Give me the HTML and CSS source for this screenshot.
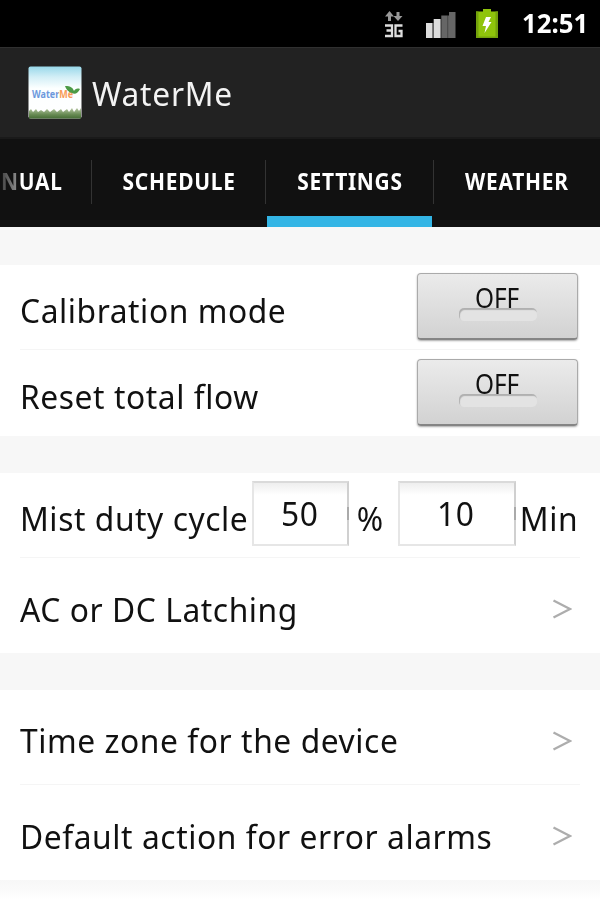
FILE: index.html
```html
<!DOCTYPE html>
<html lang="en">
<head>
<meta charset="utf-8">
<title>WaterMe</title>
<link rel="stylesheet" href="styles.css">
</head>
<body>
<header class="status">
  <svg class="net" width="20" height="28" viewBox="0 0 20 28">
    <path d="M5.500 0L10 5.500H7V10H4V5.500H1ZM14 10L9.500 5H12.500V1H15.500V5H18.500Z" fill="#999"/>
    <path d="M1 14.500H8V25H1M2.500 19.500H8M18.500 14.500H11.500V25H17.500V20H14.500" fill="none" stroke="#ddd" stroke-width="2.300"/>
  </svg>
  <svg class="signal" width="30" height="28" viewBox="0 0 30 28">
    <path d="M0 12H6.500V27H0Z" fill="#ddd"/><path d="M7.700 8H14V27H7.700Z" fill="#ddd"/>
    <path d="M15.300 4.500H21.500V27H15.300ZM23 1H29.500V27H23Z" fill="#666"/>
    <path d="M7 12V27M14.500 8V27M22.200 4.500V27" stroke="#888" stroke-width="1"/>
  </svg>
  <svg class="battery" width="22" height="30" viewBox="0 0 22 30">
    <path d="M0 2.500H7V0H15V2.500H22V29H0Z" fill="#8fc40b"/>
    <path d="M0 2.500H2.500V29H0ZM19.500 2.500H22V29H19.500ZM1 27.500H21V29H1Z" fill="#74a20c"/>
    <path d="M10 8H15L12.500 13H15.500L8.500 24L10 17H6.500Z" fill="#fff"/>
  </svg>
  <span class="clock">12:51</span>
</header>
<div class="appbar">
  <svg class="logo" width="54" height="54" viewBox="0 0 54 54">
    <defs>
      <linearGradient id="sky" x1="0" y1="0" x2="0" y2="1">
        <stop offset="0" stop-color="#98d8ea"/><stop offset=".2" stop-color="#d2eef6"/><stop offset=".42" stop-color="#fcffff"/><stop offset="1" stop-color="#fff"/>
      </linearGradient>
      <linearGradient id="grass" x1="0" y1="0" x2="0" y2="1">
        <stop offset="0" stop-color="#b9c9a6"/><stop offset=".6" stop-color="#698c55"/><stop offset="1" stop-color="#456d35"/>
      </linearGradient>
      <linearGradient id="word" gradientUnits="userSpaceOnUse" x1="4" y1="0" x2="45" y2="0">
        <stop offset="0" stop-color="#6d98dc"/><stop offset=".64" stop-color="#6d98dc"/><stop offset=".65" stop-color="#f79a58"/><stop offset="1" stop-color="#f79a58"/>
      </linearGradient>
    </defs>
    <rect x=".5" y=".5" width="53" height="52" rx="2" fill="url(#sky)"/>
    <path d="M1 45L3 43L5 46L8 43L10 46L13 44L16 46L19 43L22 46L26 43L29 46L33 43L35 46L39 43L41 46L44 42L46 46L49 42L51 45L53 42V52.500H1Z" fill="url(#grass)"/>
    <text x="4" y="32" class="logo-text" fill="url(#word)" textLength="41" lengthAdjust="spacingAndGlyphs">WaterMe</text>
    <path d="M37 20C43 20 45 22 46 25C47 23 49 22 52 23C50 27 47 29 44 27C40 26 38 23 37 20Z" fill="#4c9a46"/>
  </svg>
  <span class="title">WaterMe</span>
</div>
<nav class="tabs">
  <div class="tab tab-manual"><span class="cap">NUAL</span></div>
  <div class="tab tab-schedule"><span class="cap">SCHEDULE</span></div>
  <div class="tab tab-settings"><span class="cap">SETTINGS</span></div>
  <div class="tab tab-weather"><span class="cap">WEATHER</span></div>
</nav>
<main class="list">
  <section class="group">
    <div class="row"><span class="label">Calibration mode</span><button class="toggle"><span class="state">OFF</span><i class="lamp"></i></button></div>
    <div class="row last"><span class="label">Reset total flow</span><button class="toggle"><span class="state">OFF</span><i class="lamp"></i></button></div>
  </section>
  <section class="group">
    <div class="row duty"><span class="label">Mist duty cycle</span><div class="field percent"><span class="num">50</span></div><span class="unit unit-percent">%</span><div class="field minutes"><span class="num">10</span></div><span class="unit unit-min">Min</span></div>
    <div class="row tall last"><span class="label">AC or DC Latching</span><svg class="more" width="20" height="20" viewBox="0 0 20 20"><path d="M1.500 1.500L18 10L1.500 18.500"/></svg></div>
  </section>
  <section class="group">
    <div class="row tall"><span class="label">Time zone for the device</span><svg class="more" width="20" height="20" viewBox="0 0 20 20"><path d="M1.500 1.500L18 10L1.500 18.500"/></svg></div>
    <div class="row tall last"><span class="label">Default action for error alarms</span><svg class="more" width="20" height="20" viewBox="0 0 20 20"><path d="M1.500 1.500L18 10L1.500 18.500"/></svg></div>
  </section>
  <div class="tail"></div>
</main>
</body>
</html>
```
FILE: styles.css
```css
* { box-sizing: border-box; }
body {
  margin: 0;
  width: 600px;
  height: 900px;
  overflow: hidden;
  background: #fff;
  color: #111;
  font-family: "Noto Sans", "Open Sans", sans-serif;
  font-variant-ligatures: none;
}
span { white-space: nowrap; }
.status {
  display: flex;
  align-items: flex-start;
  height: 47px;
  background: #000;
  padding-left: 384px;
}
.net { margin-top: 11px; }
.signal { margin: 11px 0 0 22px; }
.battery { margin: 9px 0 0 20px; }
.clock {
  margin: 5px 0 0 24px;
  color: #fff;
  font-size: 26px;
  line-height: 36px;
  font-weight: 700;
  transform-origin: left;
  transform: scaleX(.99);
}
.appbar {
  display: flex;
  align-items: center;
  height: 92px;
  padding-left: 28px;
  background: #222;
  border-top: 1px solid #303030;
  border-bottom: 2px solid #1a1a1a;
}
.logo-text { font: 700 11px "Noto Sans", sans-serif; }
.title {
  margin-left: 10px;
  color: #f3f3f3;
  font-size: 33.5px;
  line-height: 46px;
  letter-spacing: .8px;
  transform-origin: left;
  transform: scaleX(.945);
}
.tabs {
  display: grid;
  grid-template-columns: 92px 174px 167px 167px;
  height: 88px;
  background: #111;
  color: #fff;
  font-size: 23px;
  font-weight: 700;
  line-height: 42px;
}
.tab {
  display: flex;
  justify-content: center;
  padding-top: 21px;
  background: linear-gradient(#333, #333) right 21px / 1px 44px no-repeat;
}
.tab-settings { border-bottom: 11px solid #33b5e5; margin-left: 1px; width: 165px; }
.tab-settings { background-image: none; }
.tab-weather { background-position: left 21px; background-size: 1px 44px; }
.tab-manual { justify-content: flex-start; padding-left: 1px; }
.tab-manual .cap {
  transform-origin: left;
  color: transparent;
  background: linear-gradient(90deg, #444, #888 17px, #fff 19px);
  -webkit-background-clip: text;
  background-clip: text;
}
.cap { letter-spacing: .8px; transform: scaleX(.91); }
.group { border-top: 37px solid #f7f7f7; padding: 0 20px; }
.group:first-child { border-top-width: 38px; }
.row {
  display: flex;
  align-items: center;
  height: 85px;
  border-bottom: 1px solid #f5f5f5;
}
.row.last { height: 86px; border-bottom: 0; }
.row.tall { height: 95px; }
.label, .unit, .num {
  font-size: 33.5px;
  line-height: 44px;
  letter-spacing: .6px;
  transform-origin: left;
  transform: scaleX(.948);
}
.label { padding-top: 6px; margin-left: -.5px; margin-right: auto; }
.toggle {
  display: flex;
  flex-direction: column;
  align-items: center;
  width: 161px;
  height: 67px;
  margin: 0 2px 1px 0;
  padding: 6px 0 0;
  border: 1px solid #aaa;
  border-bottom: 2px solid #858585;
  border-radius: 4px;
  background: linear-gradient(#ebebeb, #d2d2d2);
  box-shadow: 0 1px 2px #aaa;
  font-family: inherit;
}
.state { font-size: 26.5px; line-height: 37px; color: #111; transform: scaleX(.92); margin-bottom: -9px; z-index: 1; }
.lamp {
  width: 78px;
  height: 13px;
  border-radius: 5px;
  background: #e3e3e3;
  box-shadow: inset 1px 2px 1px #b0b0b0;
}
.duty .label { width: 232.5px; margin-right: 0; }
.field {
  display: flex;
  flex: none;
  height: 65px;
  margin-bottom: 3px;
  border: 2px solid #e6e6e6;
  border-top-color: #dadada;
  border-right-color: #d0d0d0;
  background: linear-gradient(#eee, #fff 12px);
}
.num { padding-top: 8px; transform-origin: center; }
.percent { width: 97px; margin-right: 1px; padding-right: 3px; }
.minutes { width: 118px; margin-right: 1px; padding-right: 3px; }
.field::after {
  content: "";
  align-self: center;
  width: 2px;
  height: 13px;
  margin: 0 -5px 0 auto;
  background: #aaa;
}
.field .num { margin-left: auto; position: relative; left: -1px; }
.unit { flex: none; padding-top: 6px; }
.unit-percent { width: 48px; padding-left: 7px; }
.unit-min { width: 60px; padding-left: 3px; }
.more { flex: none; margin: 7px 8px 0 0; }
.more path { fill: none; stroke: #adadad; stroke-width: 2.3; }
.tail { height: 20px; background: linear-gradient(#f7f7f7, #fbfbfb 12px, #fff); }
```
